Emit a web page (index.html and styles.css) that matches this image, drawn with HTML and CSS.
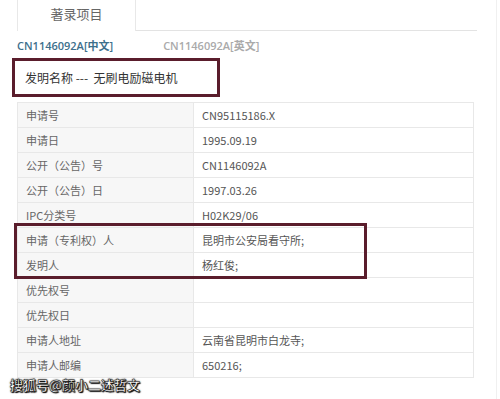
FILE: index.html
```html
<!DOCTYPE html>
<html lang="zh-CN">
<head>
<meta charset="utf-8">
<link rel="stylesheet" href="styles.css">
</head>
<body>
<div class="page">
  <div class="tabs">
    <div class="tab">著录项目</div>
    <div class="tab-rest"></div>
  </div>
  <div class="langs">
    <span class="lang active">CN1146092A[中文]</span>
    <span class="lang">CN1146092A[英文]</span>
  </div>
  <div class="title-box">发明名称 ---&nbsp; 无刷电励磁电机</div>
  <table class="biblio">
    <tr><th>申请号</th><td>CN95115186.X</td></tr>
    <tr><th>申请日</th><td>1995.09.19</td></tr>
    <tr><th>公开（公告）号</th><td>CN1146092A</td></tr>
    <tr><th>公开（公告）日</th><td>1997.03.26</td></tr>
    <tr><th>IPC分类号</th><td>H02K29/06</td></tr>
    <tr><th>申请（专利权）人</th><td>昆明市公安局看守所;</td></tr>
    <tr><th>发明人</th><td>杨红俊;</td></tr>
    <tr><th>优先权号</th><td></td></tr>
    <tr><th>优先权日</th><td></td></tr>
    <tr><th>申请人地址</th><td>云南省昆明市白龙寺;</td></tr>
    <tr><th>申请人邮编</th><td>650216;</td></tr>
  </table>
  <div class="highlight"></div>
  <div class="watermark">搜狐号@颜小二述哲文</div>
</div>
</body>
</html>
```
FILE: styles.css
```css
html, body {
  margin: 0;
  padding: 0;
  background: #fff;
}
body {
  font-family: "Noto Sans CJK SC", "Noto Sans", sans-serif;
  color: #555;
}
.page {
  position: relative;
  width: 497px;
  height: 399px;
  border-right: 1px solid #f0f0f0;
  box-sizing: border-box;
}
.tabs {
  display: flex;
  height: 31px;
  padding-left: 17px;
  width: 477px;
  box-sizing: border-box;
}
.tab {
  width: 119px;
  box-sizing: border-box;
  border-left: 1px solid #e8e8e8;
  border-right: 1px solid #e8e8e8;
  text-align: center;
  font-size: 13px;
  line-height: 28px;
  color: #666;
}
.tab-rest {
  flex: 1;
  border-bottom: 1px solid #e3e3e3;
}
.langs {
  display: flex;
  height: 27px;
  align-items: center;
  padding-left: 17px;
  gap: 50px;
  font-size: 11px;
  font-family: "Open Sans", "Noto Sans CJK SC", sans-serif;
}
.lang {
  color: #aaa;
  font-weight: 600;
}
.lang.active {
  color: #3d6f8c;
}
.title-box {
  margin-left: 12px;
  width: 208px;
  height: 39px;
  box-sizing: border-box;
  border: 3px solid #5a1d2c;
  padding-left: 10px;
  font-size: 12px;
  line-height: 33px;
  color: #333;
}
.biblio {
  margin: 5px 0 0 17px;
  width: 457px;
  border-collapse: collapse;
  font-size: 11px;
}
.biblio tr {
  height: 25px;
}
.biblio th,
.biblio td {
  border: 1px solid #e8e8e8;
  padding: 0 0 0 8px;
  text-align: left;
  font-weight: normal;
}
.biblio th {
  width: 167px;
  background: #f7f7f7;
  color: #666;
}
.biblio td {
  background: #fff;
  color: #555;
}
.highlight {
  position: absolute;
  left: 14px;
  top: 223px;
  width: 353px;
  height: 56px;
  box-sizing: border-box;
  border: 3px solid #5a1d2c;
}
.watermark {
  position: absolute;
  left: 10px;
  top: 375px;
  font-size: 13px;
  font-weight: bold;
  color: #fff;
  -webkit-text-stroke: 0.5px #111;
  text-shadow: 0 0 2px #000, 1px 1px 1px #000;
}
```
